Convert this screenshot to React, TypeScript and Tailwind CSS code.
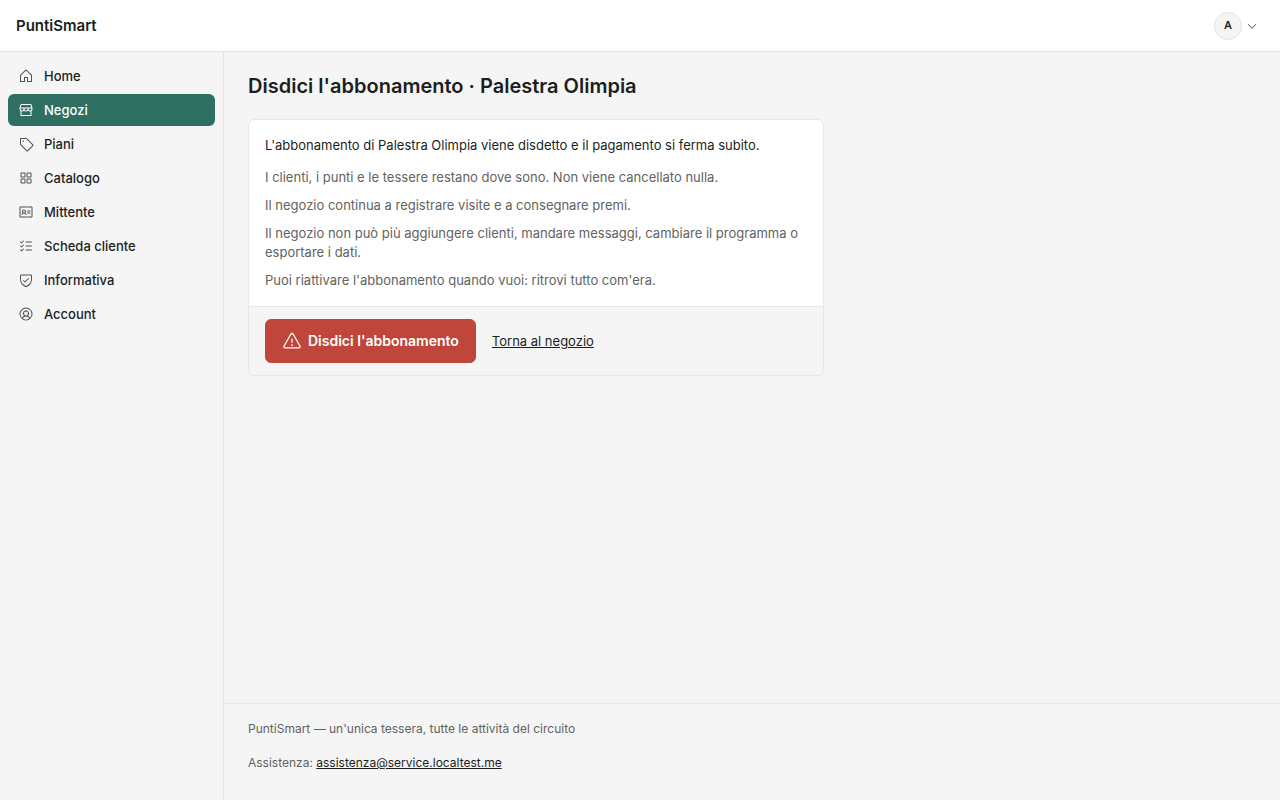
import type { IconType } from "react-icons";
import {
  PiCaretDown,
  PiHouse,
  PiIdentificationCard,
  PiListChecks,
  PiShieldCheck,
  PiSquaresFour,
  PiStorefront,
  PiTag,
  PiUserCircle,
  PiWarning,
} from "react-icons/pi";

const navItems: { label: string; icon: IconType; active?: boolean }[] = [
  { label: "Home", icon: PiHouse },
  { label: "Negozi", icon: PiStorefront, active: true },
  { label: "Piani", icon: PiTag },
  { label: "Catalogo", icon: PiSquaresFour },
  { label: "Mittente", icon: PiIdentificationCard },
  { label: "Scheda cliente", icon: PiListChecks },
  { label: "Informativa", icon: PiShieldCheck },
  { label: "Account", icon: PiUserCircle },
];

function Header() {
  return (
    <header className="flex h-[52px] items-center justify-between border-b border-[#e2e3e3] bg-white pl-4 pr-[22px]">
      <a href="#" className="text-[15px] font-semibold leading-5">
        PuntiSmart
      </a>
      <button type="button" aria-label="Menu account" className="flex items-center gap-1">
        <span className="flex h-7 w-7 items-center justify-center rounded-full border border-[#e2e3e3] bg-[#f5f5f5] text-[11px] font-semibold">
          A
        </span>
        <PiCaretDown className="h-3 w-3 text-[#4f5352]" />
      </button>
    </header>
  );
}

function Sidebar() {
  return (
    <nav className="flex w-56 shrink-0 flex-col gap-0.5 border-r border-[#e2e3e3] p-2">
      {navItems.map(({ label, icon: Icon, active }) => (
        <a
          key={label}
          href="#"
          aria-current={active ? "page" : undefined}
          className={`flex h-8 items-center gap-2.5 rounded-md px-2.5 text-[13px] font-medium leading-[19px] ${
            active ? "bg-[#2f6f62] text-white" : ""
          }`}
        >
          <Icon className={`h-4 w-4 ${active ? "text-white" : "text-[#4f5352]"}`} />
          {label}
        </a>
      ))}
    </nav>
  );
}

function CancelCard() {
  return (
    <section className="max-w-xl overflow-hidden rounded-md border border-[#e6e7e7] bg-white">
      <div className="flex flex-col gap-[9px] p-4 text-[13px] leading-[19px] text-[#5f6362]">
        <p className="mb-1 text-[#1b1f1e]">
          L'abbonamento di Palestra Olimpia viene disdetto e il pagamento si ferma subito.
        </p>
        <p>I clienti, i punti e le tessere restano dove sono. Non viene cancellato nulla.</p>
        <p>Il negozio continua a registrare visite e a consegnare premi.</p>
        <p>
          Il negozio non può più aggiungere clienti, mandare messaggi, cambiare il programma o esportare i dati.
        </p>
        <p>Puoi riattivare l'abbonamento quando vuoi: ritrovi tutto com'era.</p>
      </div>
      <div className="flex items-center gap-4 border-t border-[#e6e7e7] bg-[#f5f5f5] px-4 py-3">
        <button
          type="button"
          className="flex h-11 items-center gap-1.5 rounded-md border border-[#c0463b] bg-[#c0463b] px-4 text-sm font-semibold text-white"
        >
          <PiWarning className="h-5 w-5" />
          Disdici l'abbonamento
        </button>
        <a href="#" className="text-[13px] leading-[19px] underline">
          Torna al negozio
        </a>
      </div>
    </section>
  );
}

export default function App() {
  return (
    <div className="flex min-h-screen flex-col bg-[#f5f5f5] font-['Inter',sans-serif] text-[#1b1f1e] antialiased">
      <Header />
      <div className="flex flex-1">
        <Sidebar />
        <div className="flex flex-1 flex-col">
          <main className="flex-1 px-6 py-5">
            <h1 className="mb-[19px] text-xl font-semibold leading-7">
              Disdici l'abbonamento · Palestra Olimpia
            </h1>
            <CancelCard />
          </main>
          <footer className="flex flex-col gap-4 border-t border-[#e6e7e7] px-6 pb-7 pt-4 text-xs leading-[18px] text-[#5f6362]">
            <p>PuntiSmart — un'unica tessera, tutte le attività del circuito</p>
            <p>
              Assistenza:{" "}
              <a href="mailto:assistenza@service.localtest.me" className="text-[#1b1f1e] underline">
                assistenza@service.localtest.me
              </a>
            </p>
          </footer>
        </div>
      </div>
    </div>
  );
}
